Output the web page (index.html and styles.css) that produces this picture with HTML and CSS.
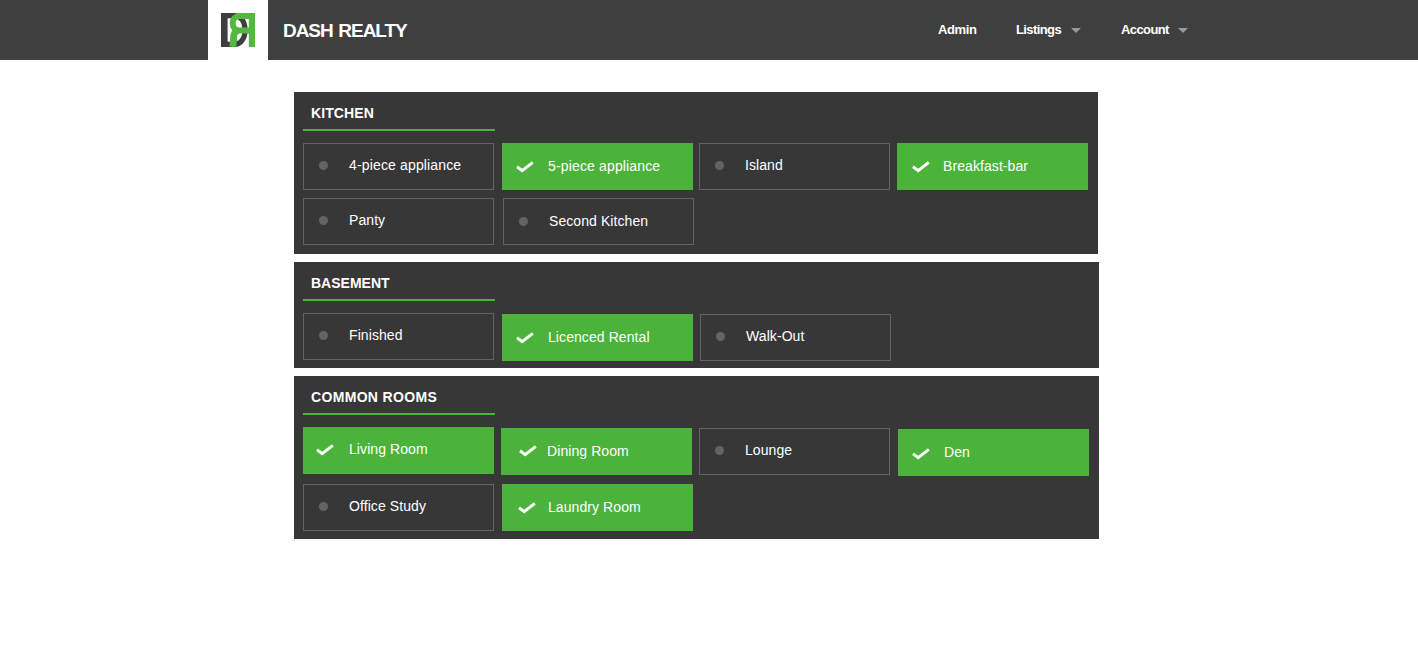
FILE: index.html
```html
<!DOCTYPE html>
<html lang="en">
<head>
<meta charset="utf-8">
<title>Dash Realty</title>
<link rel="stylesheet" href="styles.css">
</head>
<body>
<svg width="0" height="0" class="defs"><symbol id="check" viewBox="0 0 18 12"><path d="M1 5.800 6.200 9.600 16.800 1.400" fill="none" stroke="#fff" stroke-width="3"/></symbol></svg>
<header class="topbar">
  <a class="logo">
    <svg width="34" height="34" viewBox="0 0 34 34">
      <path d="M3.300 0V34" stroke="#3e3e3e" stroke-width="6.600"/>
      <path d="M5 2.500H12C20 2.500 24 9 24 17S20 31.500 12 31.500H5" fill="none" stroke="#3e3e3e" stroke-width="5.400"/>
      <path d="M31 0V34" stroke="#52b93e" stroke-width="6.400"/>
      <path d="M31 3H18.500C14.500 3 11.700 5.500 11.700 10S14.500 17.500 18.500 17.500H31" fill="none" stroke="#52b93e" stroke-width="6"/>
      <path d="M17 17.500C12.500 19 12.500 23 12.500 27Q12.500 31 11.500 34" fill="none" stroke="#52b93e" stroke-width="6.800"/>
    </svg>
  </a>
  <span class="brand">DASH REALTY</span>
  <nav class="nav">
    <a class="admin">Admin</a>
    <a class="listings">Listings</a><i class="caret"></i>
    <a class="account">Account</a><i class="caret"></i>
  </nav>
</header>
<main class="panels">
  <section class="panel kitchen">
    <h2><span>KITCHEN</span></h2>
    <div class="row">
      <div class="tile"><i class="dot"></i><span class="t1">4-piece appliance</span></div>
      <div class="tile on low g8"><svg class="check"><use href="#check"/></svg><span class="t1">5-piece appliance</span></div>
      <div class="tile g6"><i class="dot"></i><span>Island</span></div>
      <div class="tile on low g7 c15"><svg class="check"><use href="#check"/></svg><span>Breakfast-bar</span></div>
    </div>
    <div class="row second">
      <div class="tile"><i class="dot"></i><span>Panty</span></div>
      <div class="tile low g9"><i class="dot"></i><span>Second Kitchen</span></div>
    </div>
  </section>
  <section class="panel basement">
    <h2><span>BASEMENT</span></h2>
    <div class="row">
      <div class="tile"><i class="dot"></i><span>Finished</span></div>
      <div class="tile on low g8 d1"><svg class="check"><use href="#check"/></svg><span>Licenced Rental</span></div>
      <div class="tile g7 d1"><i class="dot"></i><span>Walk-Out</span></div>
    </div>
  </section>
  <section class="panel common">
    <h2><span>COMMON ROOMS</span></h2>
    <div class="row">
      <div class="tile on c13"><svg class="check"><use href="#check"/></svg><span>Living Room</span></div>
      <div class="tile on low g7 d1 c18"><svg class="check"><use href="#check"/></svg><span>Dining Room</span></div>
      <div class="tile g7 d1"><i class="dot"></i><span>Lounge</span></div>
      <div class="tile on low g8 d2 deep"><svg class="check"><use href="#check"/></svg><span>Den</span></div>
    </div>
    <div class="row second">
      <div class="tile"><i class="dot"></i><span>Office Study</span></div>
      <div class="tile on low g8 c16"><svg class="check"><use href="#check"/></svg><span>Laundry Room</span></div>
    </div>
  </section>
</main>
</body>
</html>
```
FILE: styles.css
```css
* { box-sizing: border-box; }
body { margin: 0; background: #fff; font-family: "Liberation Sans", Arial, sans-serif; color: #fff; }
.defs { display: block; }
.topbar { display: flex; height: 60px; padding-left: 208px; background: #3f3f3f; }
.logo { width: 60px; height: 60px; padding: 13px; background: #fff; }
.logo svg { display: block; }
.brand { width: 140px; margin-left: 15px; font-size: 19px; font-weight: 700; line-height: 61px; letter-spacing: -1.05px; word-spacing: 1.5px; white-space: nowrap; }
.nav { display: flex; margin-left: 515px; font-size: 13px; font-weight: 700; line-height: 60px; letter-spacing: -.6px; white-space: nowrap; }
.admin { width: 78px; letter-spacing: -.4px; }
.listings { width: 55px; }
.account { width: 57px; margin-left: 40px; }
.caret { width: 0; height: 0; margin-top: 28px; border: 5px solid transparent; border-top-color: #999; border-bottom: 0; }
.panels { display: flex; flex-direction: column; gap: 8px; padding: 32px 0 0 294px; }
.panel { width: 805px; padding-left: 9px; background: #373737; }
.kitchen { width: 804px; height: 162px; }
.basement { height: 106px; }
.common { height: 163px; }
h2 { width: 192px; height: 39px; margin: 0 0 12px; padding-left: 8px; border-bottom: 2px solid #4bb339; font-size: 14px; line-height: 42px; letter-spacing: .1px; }
.basement h2 { letter-spacing: 0; }
.common h2 { letter-spacing: .33px; }
.row { display: flex; height: 47px; }
.second { margin-top: 8px; }
.common .second { margin-top: 10px; }
.tile { display: flex; flex: none; width: 191px; height: 47px; padding-left: 15px; border: 1px solid #646464; font-size: 14px; line-height: 42px; letter-spacing: .08px; white-space: nowrap; }
.tile.on { padding-left: 14px; border: 0; background: #4bb339; line-height: 44px; }
.tile.low { padding-top: 1px; }
.t1 { letter-spacing: .15px; }
.dot { width: 9px; height: 9px; margin: 17px 21px 0 0; border-radius: 50%; background: #646464; }
.check { width: 18px; height: 12px; margin: 17px 14px 0 0; }
.tile.c13 { padding-left: 13px; }
.c13 .check { margin-right: 15px; }
.tile.c15 { padding-left: 15px; }
.c15 .check { margin-right: 13px; }
.tile.c16 { padding-left: 16px; }
.c16 .check { margin-right: 12px; }
.tile.c18 { padding-left: 18px; }
.c18 .check { margin-top: 16px; margin-right: 10px; }
.deep .check { margin-top: 18px; }
.g6 { margin-left: 6px; }
.g7 { margin-left: 7px; }
.g8 { margin-left: 8px; }
.g9 { margin-left: 9px; }
.d1 { margin-top: 1px; }
.d2 { margin-top: 2px; }
```
